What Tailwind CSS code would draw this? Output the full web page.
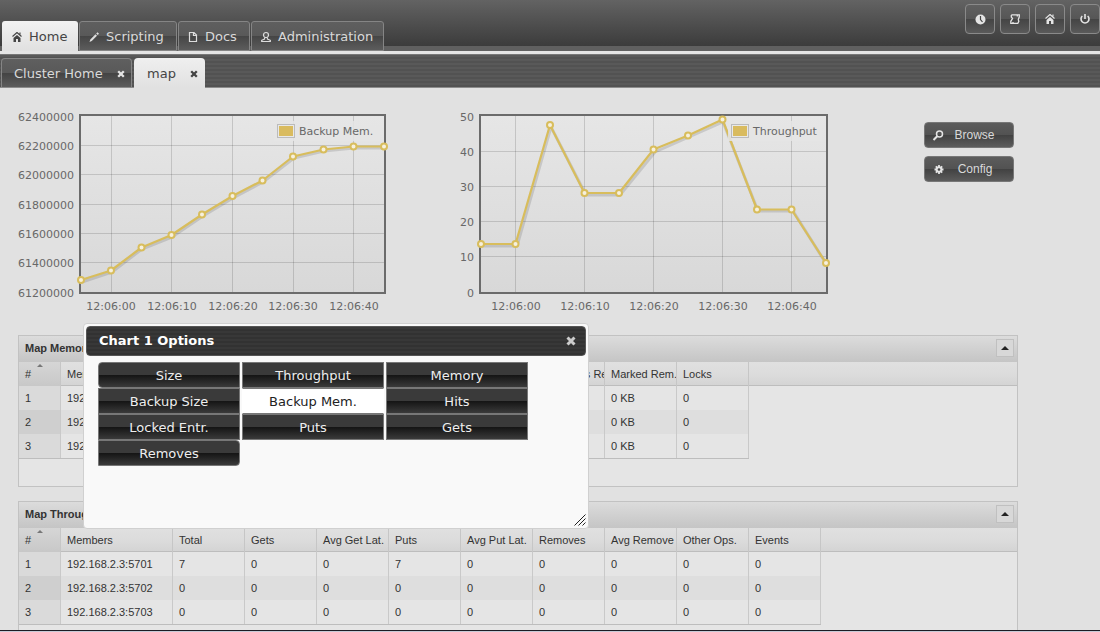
<!DOCTYPE html>
<html lang="en">
<head>
<meta charset="utf-8">
<title>Map</title>
<script src="https://cdn.jsdelivr.net/npm/@tailwindcss/browser@4"></script>
</head>
<body class="flex h-screen flex-col overflow-hidden bg-[#e1e1e1] font-['DejaVu_Sans',sans-serif] text-[13px] leading-4 text-[#d9d9d9]">

<header class="shrink-0">
  <div class="flex h-[51px] items-end justify-between border-b-[5px] border-[#606060] bg-linear-to-b from-[#636363] to-[#3c3c3c] pl-0.5">
    <nav class="-mb-[5px] flex items-end gap-px">
      <a href="#" class="flex h-[30px] w-[76px] items-center gap-1.5 rounded-t-[3px] bg-linear-to-b from-[#f2f2f2] to-[#e0e0e0] px-[9px] pt-0.5 text-[#444]">
        <svg class="h-3 w-3 shrink-0" viewBox="0 0 12 12"><path d="M6 1.500 1.500 5.500M6 1.500 10.500 5.500M9 1.500V3.500" fill="none" stroke="#444" stroke-width="1.100"/><path d="M6 4 9.500 7V11H7V8H5v3H2.500V7Z" fill="#444"/></svg>
        <span>Home</span>
      </a>
      <a href="#" class="flex h-[30px] w-[98px] items-center gap-1.5 rounded-t-[3px] border border-[#858585] bg-[linear-gradient(to_bottom,#5f5f5f_0,#595959_50%,#454545_50%,#5c5c5c_100%)] px-2 pt-0.5">
        <svg class="h-3 w-3 shrink-0" viewBox="0 0 12 12"><path d="M1.500 11 2.300 8.500 7.500 3.300 9 4.800 3.800 10Z M8.200 2.600 9.500 1.300 11 2.800 9.700 4.100Z" fill="#ddd"/></svg>
        <span>Scripting</span>
      </a>
      <a href="#" class="flex h-[30px] w-[72px] items-center gap-1.5 rounded-t-[3px] border border-[#858585] bg-[linear-gradient(to_bottom,#5f5f5f_0,#595959_50%,#454545_50%,#5c5c5c_100%)] px-2 pt-0.5">
        <svg class="h-3 w-3 shrink-0" viewBox="0 0 12 12"><path d="M2.500 1.500H7L9.500 4V10.500H2.500ZM6.500 1.500V4.500H9.500" fill="none" stroke="#ddd" stroke-width="1.200"/></svg>
        <span>Docs</span>
      </a>
      <a href="#" class="flex h-[30px] w-[133px] items-center gap-1.5 rounded-t-[3px] border border-[#858585] bg-[linear-gradient(to_bottom,#5f5f5f_0,#595959_50%,#454545_50%,#5c5c5c_100%)] px-2 pt-0.5">
        <svg class="h-3 w-3 shrink-0" viewBox="0 0 12 12"><circle cx="6" cy="4" r="2.500" fill="none" stroke="#ddd" stroke-width="1.200"/><path d="M4.800 6.500 4.500 8 1.700 9.300V10.500H10.300V9.300L7.500 8 7.200 6.500" fill="none" stroke="#ddd" stroke-width="1.200"/></svg>
        <span>Administration</span>
      </a>
    </nav>
    <div class="flex gap-[5px] self-start pt-1">
      <button aria-label="Time" class="grid h-[30px] w-[30px] place-items-center rounded-[4px] border border-[#8a8a8a] bg-[linear-gradient(to_bottom,#606060_0,#565656_50%,#444_50%,#5a5a5a_100%)]">
        <svg class="h-3 w-3" viewBox="0 0 12 12"><circle cx="6.500" cy="6.500" r="5" fill="#e4e4e4"/><path d="M6.500 3V6.500L8.500 9" fill="none" stroke="#444" stroke-width="1.200"/></svg>
      </button>
      <button aria-label="Scripts" class="grid h-[30px] w-[30px] place-items-center rounded-[4px] border border-[#8a8a8a] bg-[linear-gradient(to_bottom,#606060_0,#565656_50%,#444_50%,#5a5a5a_100%)]">
        <svg class="h-3 w-3" viewBox="0 0 12 12"><path d="M3 1.800H10.300V3.800L9.300 6.500 9.800 8.500 8.800 10.300H1.800V8.300L3.500 5.500 2.300 4V2.500ZM8.300 2.500V3.500M4 10V9" fill="none" stroke="#e4e4e4" stroke-width="1.300"/></svg>
      </button>
      <button aria-label="Home" class="grid h-[30px] w-[30px] place-items-center rounded-[4px] border border-[#8a8a8a] bg-[linear-gradient(to_bottom,#606060_0,#565656_50%,#444_50%,#5a5a5a_100%)]">
        <svg class="h-3 w-3" viewBox="0 0 12 12"><path d="M6 1.500 1.500 5.500M6 1.500 10.500 5.500M9 1.500V3.500" fill="none" stroke="#e4e4e4" stroke-width="1.100"/><path d="M6 4 9.500 7V11H7V8H5v3H2.500V7Z" fill="#e4e4e4"/></svg>
      </button>
      <button aria-label="Log out" class="grid h-[30px] w-[30px] place-items-center rounded-[4px] border border-[#8a8a8a] bg-[linear-gradient(to_bottom,#606060_0,#565656_50%,#444_50%,#5a5a5a_100%)]">
        <svg class="h-3 w-3" viewBox="0 0 12 12"><path d="M3.300 3A4 4 0 1 0 8.700 3M6 1V6" fill="none" stroke="#e4e4e4" stroke-width="1.600"/></svg>
      </button>
    </div>
  </div>
  <div class="h-[3px] bg-[#e4e4e4]"></div>
  <div class="flex h-[34px] items-end gap-0.5 border-y border-t-[#777] border-b-[#8c8c8c] bg-[repeating-linear-gradient(to_bottom,#595959_0_2px,#525252_2px_4px)] pl-px">
    <div class="flex h-[29px] w-[131px] items-center justify-between rounded-t-[4px] border border-b-0 border-[#858585] bg-[linear-gradient(to_bottom,#5f5f5f_0,#595959_50%,#434343_50%,#5c5c5c_100%)] pt-px pr-1.5 pl-3">
      <a href="#">Cluster Home</a>
      <button aria-label="Close Cluster Home"><svg class="h-2 w-2" viewBox="0 0 8 8"><path d="M1.200 1.200 6.800 6.800M6.800 1.200 1.200 6.800" stroke="#e4e4e4" stroke-width="2.300"/></svg></button>
    </div>
    <div class="-mb-px flex h-[30px] w-[71px] items-center justify-between rounded-t-[4px] bg-linear-to-b from-[#efefef] to-[#e1e1e1] pt-px pr-[7px] pl-[13px] text-[#444]">
      <a href="#">map</a>
      <button aria-label="Close map"><svg class="h-2 w-2" viewBox="0 0 8 8"><path d="M1.200 1.200 6.800 6.800M6.800 1.200 1.200 6.800" stroke="#444" stroke-width="2.300"/></svg></button>
    </div>
  </div>
</header>

<main class="relative min-h-0 flex-1 overflow-hidden bg-[#e1e1e1] pr-[82px] pl-[18px]">
  <section class="flex items-start justify-between pt-5 pr-1">
    <div class="flex gap-[63px]">
    <svg class="h-[207px] w-[372px] shrink-0" viewBox="18 108 372 207" font-size="11" fill="#686868">
      <defs><linearGradient id="p1" x1="0" y1="0" x2="0" y2="1"><stop offset="0" stop-color="#e6e6e6"/><stop offset="1" stop-color="#d8d8d8"/></linearGradient></defs>
      <rect x="80" y="115" width="305" height="178" fill="url(#p1)"/>
      <path d="M111.500 115V293M171.500 115V293M232.500 115V293M293.500 115V293M353.500 115V293M80 145.500H385M80 174.500H385M80 204.500H385M80 233.500H385M80 262.500H385" stroke="#000" stroke-opacity=".14" fill="none"/>
      <rect x="80" y="115" width="305" height="178" fill="none" stroke="#6b6b6b" stroke-width="2"/>
      <g fill="none" stroke-linejoin="round">
        <polyline points="82,282 112,272 142,249 172,237 203,216 233,198 263,182 294,158 324,151 354,148 385,148" stroke="#000" stroke-opacity=".12" stroke-width="3"/>
        <polyline points="81,280 111,270.500 141.500,247.500 171.500,235 202,214.500 232.500,196 262.500,180.500 293,156.500 323.500,149.500 353.500,146.500 384,146.500" stroke="#d8bd5c" stroke-width="2.200"/>
      </g>
      <g fill="#f6f0de" stroke="#d8bd5c" stroke-width="2">
        <circle cx="81" cy="280" r="3"/><circle cx="111" cy="270.500" r="3"/><circle cx="141.500" cy="247.500" r="3"/><circle cx="171.500" cy="235" r="3"/><circle cx="202" cy="214.500" r="3"/><circle cx="232.500" cy="196" r="3"/><circle cx="262.500" cy="180.500" r="3"/><circle cx="293" cy="156.500" r="3"/><circle cx="323.500" cy="149.500" r="3"/><circle cx="353.500" cy="146.500" r="3"/><circle cx="384" cy="146.500" r="3"/>
      </g>
      <rect x="274" y="121" width="106" height="20" fill="#e5e5e5" fill-opacity=".85"/>
      <rect x="277.500" y="124.500" width="17" height="13" fill="#e8e8e8" stroke="#bbb"/>
      <rect x="279" y="126" width="14" height="10" fill="#d9bb5f"/>
      <text x="299" y="135">Backup Mem.</text>
      <g text-anchor="end">
        <text x="74" y="121">62400000</text><text x="74" y="150">62200000</text><text x="74" y="179">62000000</text><text x="74" y="209">61800000</text><text x="74" y="238">61600000</text><text x="74" y="267">61400000</text><text x="74" y="297">61200000</text>
      </g>
      <g text-anchor="middle">
        <text x="111" y="310">12:06:00</text><text x="172" y="310">12:06:10</text><text x="233" y="310">12:06:20</text><text x="293" y="310">12:06:30</text><text x="354" y="310">12:06:40</text>
      </g>
    </svg>
    <svg class="h-[207px] w-[380px] shrink-0" viewBox="453 108 380 207" font-size="11" fill="#686868">
      <defs><linearGradient id="p2" x1="0" y1="0" x2="0" y2="1"><stop offset="0" stop-color="#e6e6e6"/><stop offset="1" stop-color="#d8d8d8"/></linearGradient></defs>
      <rect x="480" y="115" width="347" height="178" fill="url(#p2)"/>
      <path d="M515.500 115V293M584.500 115V293M653.500 115V293M722.500 115V293M791.500 115V293M480 151.500H827M480 186.500H827M480 221.500H827M480 256.500H827" stroke="#000" stroke-opacity=".14" fill="none"/>
      <rect x="480" y="115" width="347" height="178" fill="none" stroke="#6b6b6b" stroke-width="2"/>
      <g fill="none" stroke-linejoin="round">
        <polyline points="482,246 517,246 551,127 586,195 620,195 655,152 689,137 723,122 758,211 793,211 827,265" stroke="#000" stroke-opacity=".12" stroke-width="3"/>
        <polyline points="481,244 515.500,244 550,125 584.500,193 619,193 653.500,149.500 688,135.500 722.500,119.500 757,209.500 791.500,209.500 826,263" stroke="#d8bd5c" stroke-width="2.200"/>
      </g>
      <g fill="#f6f0de" stroke="#d8bd5c" stroke-width="2">
        <circle cx="481" cy="244" r="3"/><circle cx="515.500" cy="244" r="3"/><circle cx="550" cy="125" r="3"/><circle cx="584.500" cy="193" r="3"/><circle cx="619" cy="193" r="3"/><circle cx="653.500" cy="149.500" r="3"/><circle cx="688" cy="135.500" r="3"/><circle cx="722.500" cy="119.500" r="3"/><circle cx="757" cy="209.500" r="3"/><circle cx="791.500" cy="209.500" r="3"/><circle cx="826" cy="263" r="3"/>
      </g>
      <rect x="728" y="121" width="94" height="20" fill="#e5e5e5" fill-opacity=".85"/>
      <rect x="731.500" y="124.500" width="17" height="13" fill="#e8e8e8" stroke="#bbb"/>
      <rect x="733" y="126" width="14" height="10" fill="#d9bb5f"/>
      <text x="753" y="135">Throughput</text>
      <g text-anchor="end">
        <text x="474" y="121">50</text><text x="474" y="156">40</text><text x="474" y="191">30</text><text x="474" y="226">20</text><text x="474" y="261">10</text><text x="474" y="297">0</text>
      </g>
      <g text-anchor="middle">
        <text x="516" y="310">12:06:00</text><text x="585" y="310">12:06:10</text><text x="654" y="310">12:06:20</text><text x="723" y="310">12:06:30</text><text x="792" y="310">12:06:40</text>
      </g>
    </svg>
    </div>
    <div class="flex w-[90px] flex-col gap-2 pt-3.5 font-['Liberation_Sans',sans-serif] text-xs">
      <button class="flex h-[26px] items-center rounded-[4px] border border-[#777] bg-[linear-gradient(to_bottom,#5c5c5c_0,#525252_50%,#414141_50%,#5c5c5c_100%)] pr-2 pl-[7px]">
        <svg class="h-3 w-3" viewBox="0 0 12 12"><circle cx="7.500" cy="5" r="3" fill="none" stroke="#e4e4e4" stroke-width="1.500"/><path d="M5.200 7.300 1.500 11" stroke="#e4e4e4" stroke-width="2"/></svg>
        <span class="flex-1">Browse</span>
      </button>
      <button class="flex h-[26px] items-center rounded-[4px] border border-[#777] bg-[linear-gradient(to_bottom,#5c5c5c_0,#525252_50%,#414141_50%,#5c5c5c_100%)] pr-2 pl-2">
        <svg class="h-3 w-3" viewBox="0 0 12 12"><path d="M6 2V11M1.500 6.500H10.500M2.800 3.300 9.200 9.700M9.200 3.300 2.800 9.700" stroke="#e4e4e4" stroke-width="1.800"/><circle cx="6" cy="6.500" r="2.400" fill="none" stroke="#e4e4e4" stroke-width="1.800"/><circle cx="6" cy="6.500" r="1.300" fill="#444"/></svg>
        <span class="flex-1">Config</span>
      </button>
    </div>
  </section>

  <section class="mt-5 h-[152px] border border-[#c2c2c2] bg-[#e5e5e5] font-['Liberation_Sans',sans-serif] text-[11px] text-[#333]">
    <div class="flex h-[26px] items-center justify-between bg-linear-to-b from-[#dcdcdc] to-[#c5c5c5] pr-[3px] pb-0.5 pl-1.5">
      <h2 class="font-bold">Map Memory Data Table</h2>
      <button aria-label="Collapse memory table" class="grid h-[18px] w-[18px] place-items-center border border-[#c0c0c0] bg-[#d8d8d8]"><svg class="h-1 w-2" viewBox="0 0 8 4"><path d="M0 4 4 0 8 4Z" fill="#222"/></svg></button>
    </div>
    <div class="bg-[linear-gradient(to_bottom,#e0e0e0_0,#dcdcdc_12px,#d4d4d4_23px,#bdbdbd_23px,#bdbdbd_24px,transparent_24px)]">
      <table class="w-[730px] table-fixed border-separate border-spacing-0 border-b border-[#bdbdbd] text-left [&_td]:h-6 [&_td]:border-r [&_td]:border-[#c9c9c9] [&_td]:p-0 [&_td]:pl-1.5 [&_th]:h-6 [&_th]:overflow-hidden [&_th]:border-r [&_th]:border-[#c6c6c6] [&_th]:p-0 [&_th]:pl-1.5 [&_th]:font-normal [&_th]:whitespace-nowrap">
        <colgroup><col class="w-[42px]"><col class="w-[112px]"><col span="8" class="w-[72px]"></colgroup>
        <thead><tr><th class="relative bg-linear-to-b from-[#d6d6d6] to-[#c8c8c8]">#<svg class="absolute top-0.5 left-[18px] h-[3px] w-[6px]" viewBox="0 0 6 3"><path d="M0 3 3 0 6 3Z" fill="#777"/></svg></th><th>Members</th><th></th><th></th><th></th><th></th><th></th><th>Marked as Re</th><th>Marked Rem.</th><th>Locks</th></tr></thead>
        <tbody>
          <tr><td class="bg-[#dadada]">1</td><td>192.168.2.3:5701</td><td></td><td></td><td></td><td></td><td></td><td></td><td>0 KB</td><td>0</td></tr>
          <tr class="bg-[#dedede]"><td class="bg-[#cfcfcf]">2</td><td>192.168.2.3:5702</td><td></td><td></td><td></td><td></td><td></td><td></td><td>0 KB</td><td>0</td></tr>
          <tr><td class="bg-[#dadada]">3</td><td>192.168.2.3:5703</td><td></td><td></td><td></td><td></td><td></td><td></td><td>0 KB</td><td>0</td></tr>
        </tbody>
      </table>
    </div>
  </section>

  <section class="mt-3.5 h-[152px] border border-[#c2c2c2] bg-[#e5e5e5] font-['Liberation_Sans',sans-serif] text-[11px] text-[#333]">
    <div class="flex h-[26px] items-center justify-between bg-linear-to-b from-[#dcdcdc] to-[#c5c5c5] pr-[3px] pb-0.5 pl-1.5">
      <h2 class="font-bold">Map Throughput Data Table</h2>
      <button aria-label="Collapse throughput table" class="grid h-[18px] w-[18px] place-items-center border border-[#c0c0c0] bg-[#d8d8d8]"><svg class="h-1 w-2" viewBox="0 0 8 4"><path d="M0 4 4 0 8 4Z" fill="#222"/></svg></button>
    </div>
    <div class="bg-[linear-gradient(to_bottom,#e0e0e0_0,#dcdcdc_12px,#d4d4d4_23px,#bdbdbd_23px,#bdbdbd_24px,transparent_24px)]">
      <table class="w-[802px] table-fixed border-separate border-spacing-0 border-b border-[#bdbdbd] text-left [&_td]:h-6 [&_td]:border-r [&_td]:border-[#c9c9c9] [&_td]:p-0 [&_td]:pl-1.5 [&_th]:h-6 [&_th]:overflow-hidden [&_th]:border-r [&_th]:border-[#c6c6c6] [&_th]:p-0 [&_th]:pl-1.5 [&_th]:font-normal [&_th]:whitespace-nowrap">
        <colgroup><col class="w-[42px]"><col class="w-[112px]"><col span="9" class="w-[72px]"></colgroup>
        <thead><tr><th class="relative bg-linear-to-b from-[#d6d6d6] to-[#c8c8c8]">#<svg class="absolute top-0.5 left-[18px] h-[3px] w-[6px]" viewBox="0 0 6 3"><path d="M0 3 3 0 6 3Z" fill="#777"/></svg></th><th>Members</th><th>Total</th><th>Gets</th><th>Avg Get Lat.</th><th>Puts</th><th>Avg Put Lat.</th><th>Removes</th><th>Avg Remove</th><th>Other Ops.</th><th>Events</th></tr></thead>
        <tbody>
          <tr><td class="bg-[#dadada]">1</td><td>192.168.2.3:5701</td><td>7</td><td>0</td><td>0</td><td>7</td><td>0</td><td>0</td><td>0</td><td>0</td><td>0</td></tr>
          <tr class="bg-[#dedede]"><td class="bg-[#cfcfcf]">2</td><td>192.168.2.3:5702</td><td>0</td><td>0</td><td>0</td><td>0</td><td>0</td><td>0</td><td>0</td><td>0</td><td>0</td></tr>
          <tr><td class="bg-[#dadada]">3</td><td>192.168.2.3:5703</td><td>0</td><td>0</td><td>0</td><td>0</td><td>0</td><td>0</td><td>0</td><td>0</td><td>0</td></tr>
        </tbody>
      </table>
    </div>
  </section>

  <div role="dialog" aria-labelledby="dlg-title" class="absolute top-[235px] left-[83px] h-[206px] w-[506px] rounded-[4px] border border-[#d0d0d0] bg-[#f9f9f9] p-0.5">
    <div class="flex h-[30px] items-center justify-between rounded-[4px] border border-[#555] bg-[repeating-linear-gradient(to_bottom,#383838_0_2px,#323232_2px_4px)] pr-[9px] pl-3 text-white">
      <h2 id="dlg-title" class="font-bold">Chart 1 Options</h2>
      <button aria-label="Close"><svg class="h-2.5 w-2.5" viewBox="0 0 10 10"><path d="M1.500 1.500 8.500 8.500M8.500 1.500 1.500 8.500" stroke="#ccc" stroke-width="3"/></svg></button>
    </div>
    <div class="mt-1.5 ml-3 grid w-[430px] grid-cols-3 gap-x-0.5 text-[#eee] [&>button]:h-[26px] [&>button]:border [&>button]:border-[#777] [&>button]:pt-0.5">
      <button class="rounded-l-[4px] bg-[linear-gradient(to_bottom,#3a3a3a_0_50%,#141414_50%,#3a3a3a_100%)]">Size</button>
      <button class="bg-[linear-gradient(to_bottom,#3a3a3a_0_50%,#141414_50%,#3a3a3a_100%)]">Throughput</button>
      <button class="bg-[linear-gradient(to_bottom,#3a3a3a_0_50%,#141414_50%,#3a3a3a_100%)]">Memory</button>
      <button class="bg-[linear-gradient(to_bottom,#3a3a3a_0_50%,#141414_50%,#3a3a3a_100%)]">Backup Size</button>
      <button aria-pressed="true" class="border-x-white! bg-white text-[#222]">Backup Mem.</button>
      <button class="bg-[linear-gradient(to_bottom,#3a3a3a_0_50%,#141414_50%,#3a3a3a_100%)]">Hits</button>
      <button class="bg-[linear-gradient(to_bottom,#3a3a3a_0_50%,#141414_50%,#3a3a3a_100%)]">Locked Entr.</button>
      <button class="bg-[linear-gradient(to_bottom,#3a3a3a_0_50%,#141414_50%,#3a3a3a_100%)]">Puts</button>
      <button class="bg-[linear-gradient(to_bottom,#3a3a3a_0_50%,#141414_50%,#3a3a3a_100%)]">Gets</button>
      <button class="rounded-r-[4px] bg-[linear-gradient(to_bottom,#3a3a3a_0_50%,#141414_50%,#3a3a3a_100%)]">Removes</button>
    </div>
    <svg class="absolute right-0.5 bottom-0.5 h-3 w-3" viewBox="0 0 12 12"><path d="M.5 11.500 11.500.5M4.500 11.500 11.500 4.500M8.500 11.500 11.500 8.500" stroke="#222" fill="none"/></svg>
  </div>
</main>
<footer class="h-0.5 shrink-0 border-t border-[#1c1c24] bg-[#c8cad6]"></footer>
</body>
</html>
